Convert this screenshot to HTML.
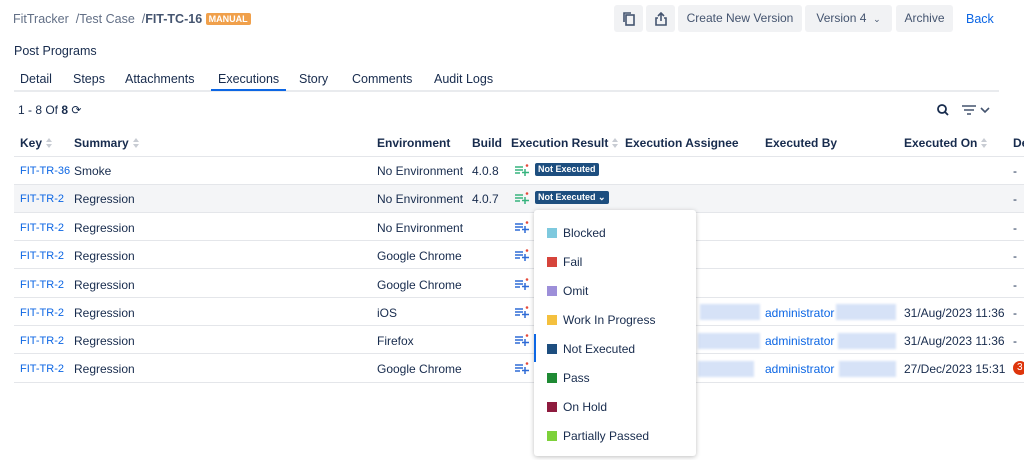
<!DOCTYPE html>
<html><head><style>
*{box-sizing:border-box;margin:0;padding:0}
body{width:1024px;height:460px;overflow:hidden;background:#fff;font-family:"Liberation Sans",sans-serif;font-size:12px;color:#172b4d;position:relative}
.a{position:absolute;white-space:nowrap}
.btn{position:absolute;top:5px;height:27px;background:#f1f2f4;border-radius:3px;color:#44546f;font-size:12px;line-height:27px;text-align:center}
.tab{position:absolute;top:72px;font-size:12.5px;color:#172b4d}
.hl{position:absolute;left:14px;width:1010px;height:1px;background:#e4e6ea}
.th{position:absolute;top:136px;font-weight:bold;font-size:12px}
.lnk{color:#0c66e4}
.k{font-size:11px;margin-top:1px}
.sort{display:inline-block;width:7px;height:10px;vertical-align:-1px;margin-left:4px;position:relative}
.sort:before{content:"";position:absolute;left:0;top:0;border-left:3.5px solid transparent;border-right:3.5px solid transparent;border-bottom:4px solid #c8ccd3}
.sort:after{content:"";position:absolute;left:0;top:6px;border-left:3.5px solid transparent;border-right:3.5px solid transparent;border-top:4px solid #c8ccd3}
.ne{position:absolute;background:#1d4e7f;color:#fff;font-size:9px;font-weight:bold;border-radius:2px;padding:0 3px;height:13px;line-height:13px}
.blur{position:absolute;height:16px;background:#d6e2f7;filter:blur(1px)}
.dd{position:absolute;left:534px;top:210px;width:162px;height:246px;background:#fff;box-shadow:0 1px 5px rgba(0,0,0,.25);border-radius:3px}
.it{position:absolute;left:13px;font-size:12px;color:#172b4d}
.sq{display:inline-block;width:10px;height:10px;margin-right:6px;vertical-align:-1px}
</style></head><body>
<div class="a" style="left:13px;top:12px;color:#626f86;font-size:12.5px">FitTracker &nbsp;/Test Case &nbsp;/<b style="color:#44546f">FIT-TC-16</b> <span style="background:#f0a04b;color:#fff;font-size:9px;font-weight:bold;padding:1px 3px;border-radius:2px;vertical-align:1px">MANUAL</span></div>
<div class="btn" style="left:614px;width:29px"><svg width="14" height="14" viewBox="0 0 14 14" style="margin-top:7px"><rect x="4" y="3" width="8" height="10" fill="none" stroke="#44546f" stroke-width="1.6"/><path d="M2 10V1h7" fill="none" stroke="#44546f" stroke-width="1.6"/></svg></div>
<div class="btn" style="left:646px;width:29px"><svg width="14" height="14" viewBox="0 0 14 14" style="margin-top:7px"><path d="M7 9V1M4 4l3-3 3 3M4 6H2v7h10V6h-2" fill="none" stroke="#44546f" stroke-width="1.6"/></svg></div>
<div class="btn" style="left:678px;width:124px">Create New Version</div>
<div class="btn" style="left:805px;width:87px">Version 4 &nbsp;<span style="font-size:9px">&#8964;</span></div>
<div class="btn" style="left:896px;width:57px">Archive</div>
<div class="a lnk" style="left:966px;top:12px;font-size:12.5px">Back</div>
<div class="a" style="left:14px;top:44px;font-size:12.5px">Post Programs</div>
<div class="tab" style="left:20px">Detail</div>
<div class="tab" style="left:73px">Steps</div>
<div class="tab" style="left:125px">Attachments</div>
<div class="tab" style="left:218px">Executions</div>
<div class="tab" style="left:299px">Story</div>
<div class="tab" style="left:352px">Comments</div>
<div class="tab" style="left:434px">Audit Logs</div>
<div class="a" style="left:14px;top:90px;width:985px;height:2px;background:#e9ebee"></div>
<div class="a" style="left:211px;top:89px;width:75px;height:2px;background:#0c66e4"></div>
<div class="a" style="left:18px;top:103px;font-size:12px">1 - 8 Of <b>8</b> &#10227;</div>
<svg class="a" style="left:936px;top:103px" width="60" height="14"><circle cx="6" cy="6" r="4" fill="none" stroke="#172b4d" stroke-width="1.8"/><path d="M9 9l3 3" stroke="#172b4d" stroke-width="1.8"/><path d="M26 3h14M28 7h10M31 11h4" stroke="#44546f" stroke-width="1.6"/><path d="M45 5l4 4 4-4" fill="none" stroke="#44546f" stroke-width="1.6"/></svg>
<div class="th" style="left:20px">Key<span class="sort"></span></div>
<div class="th" style="left:74px">Summary<span class="sort"></span></div>
<div class="th" style="left:377px">Environment</div>
<div class="th" style="left:472px">Build</div>
<div class="th" style="left:511px">Execution Result<span class="sort"></span></div>
<div class="th" style="left:625px">Execution Assignee</div>
<div class="th" style="left:765px">Executed By</div>
<div class="th" style="left:904px">Executed On<span class="sort"></span></div>
<div class="th" style="left:1013px">De</div>
<div class="a" style="left:14px;top:185px;width:1010px;height:27px;background:#f4f5f7"></div>
<div class="hl" style="top:156px"></div><div class="hl" style="top:184px"></div><div class="hl" style="top:212px"></div><div class="hl" style="top:240px"></div><div class="hl" style="top:268px"></div><div class="hl" style="top:297px"></div><div class="hl" style="top:325px"></div><div class="hl" style="top:353px"></div><div class="hl" style="top:382px"></div>

<div class="a lnk k" style="left:20px;top:164px">FIT-TR-36</div><div class="a" style="left:74px;top:164px">Smoke</div><div class="a" style="left:377px;top:164px">No Environment</div><div class="a" style="left:472px;top:164px">4.0.8</div>
<div class="a lnk k" style="left:20px;top:192px">FIT-TR-2</div><div class="a" style="left:74px;top:192px">Regression</div><div class="a" style="left:377px;top:192px">No Environment</div><div class="a" style="left:472px;top:192px">4.0.7</div>
<div class="a lnk k" style="left:20px;top:221px">FIT-TR-2</div><div class="a" style="left:74px;top:221px">Regression</div><div class="a" style="left:377px;top:221px">No Environment</div>
<div class="a lnk k" style="left:20px;top:249px">FIT-TR-2</div><div class="a" style="left:74px;top:249px">Regression</div><div class="a" style="left:377px;top:249px">Google Chrome</div>
<div class="a lnk k" style="left:20px;top:278px">FIT-TR-2</div><div class="a" style="left:74px;top:278px">Regression</div><div class="a" style="left:377px;top:278px">Google Chrome</div>
<div class="a lnk k" style="left:20px;top:306px">FIT-TR-2</div><div class="a" style="left:74px;top:306px">Regression</div><div class="a" style="left:377px;top:306px">iOS</div>
<div class="a lnk k" style="left:20px;top:334px">FIT-TR-2</div><div class="a" style="left:74px;top:334px">Regression</div><div class="a" style="left:377px;top:334px">Firefox</div>
<div class="a lnk k" style="left:20px;top:362px">FIT-TR-2</div><div class="a" style="left:74px;top:362px">Regression</div><div class="a" style="left:377px;top:362px">Google Chrome</div>

<svg class="a" style="left:515px;top:164px" width="14" height="12"><path d="M0 3h8M0 6h8M0 9h5M10 5v7M7 8.5h7" stroke="#36b37e" stroke-width="1.5"/><circle cx="12" cy="1.5" r="1.3" fill="#e5493a"/></svg>
<svg class="a" style="left:515px;top:192px" width="14" height="12"><path d="M0 3h8M0 6h8M0 9h5M10 5v7M7 8.5h7" stroke="#36b37e" stroke-width="1.5"/><circle cx="12" cy="1.5" r="1.3" fill="#e5493a"/></svg>
<svg class="a" style="left:515px;top:221px" width="14" height="12"><path d="M0 3h8M0 6h8M0 9h5M10 5v7M7 8.5h7" stroke="#2f6bd6" stroke-width="1.5"/><circle cx="12" cy="1.5" r="1.3" fill="#e5493a"/></svg>
<svg class="a" style="left:515px;top:249px" width="14" height="12"><path d="M0 3h8M0 6h8M0 9h5M10 5v7M7 8.5h7" stroke="#2f6bd6" stroke-width="1.5"/><circle cx="12" cy="1.5" r="1.3" fill="#e5493a"/></svg>
<svg class="a" style="left:515px;top:278px" width="14" height="12"><path d="M0 3h8M0 6h8M0 9h5M10 5v7M7 8.5h7" stroke="#2f6bd6" stroke-width="1.5"/><circle cx="12" cy="1.5" r="1.3" fill="#e5493a"/></svg>
<svg class="a" style="left:515px;top:306px" width="14" height="12"><path d="M0 3h8M0 6h8M0 9h5M10 5v7M7 8.5h7" stroke="#2f6bd6" stroke-width="1.5"/><circle cx="12" cy="1.5" r="1.3" fill="#e5493a"/></svg>
<svg class="a" style="left:515px;top:334px" width="14" height="12"><path d="M0 3h8M0 6h8M0 9h5M10 5v7M7 8.5h7" stroke="#2f6bd6" stroke-width="1.5"/><circle cx="12" cy="1.5" r="1.3" fill="#e5493a"/></svg>
<svg class="a" style="left:515px;top:362px" width="14" height="12"><path d="M0 3h8M0 6h8M0 9h5M10 5v7M7 8.5h7" stroke="#2f6bd6" stroke-width="1.5"/><circle cx="12" cy="1.5" r="1.3" fill="#e5493a"/></svg>
<div class="ne" style="left:535px;top:163px">Not Executed</div>
<div class="ne" style="left:535px;top:191px">Not Executed &#8964;</div>

<div class="blur" style="left:700px;top:304px;width:60px"></div><div class="blur" style="left:836px;top:304px;width:60px"></div>
<div class="blur" style="left:698px;top:333px;width:62px"></div><div class="blur" style="left:838px;top:333px;width:58px"></div>
<div class="blur" style="left:698px;top:361px;width:56px"></div><div class="blur" style="left:839px;top:361px;width:57px"></div>
<div class="a lnk" style="left:765px;top:306px">administrator</div><div class="a" style="left:904px;top:306px">31/Aug/2023 11:36</div>
<div class="a lnk" style="left:765px;top:334px">administrator</div><div class="a" style="left:904px;top:334px">31/Aug/2023 11:36</div>
<div class="a lnk" style="left:765px;top:362px">administrator</div><div class="a" style="left:904px;top:362px">27/Dec/2023 15:31</div>
<div class="a" style="left:1013px;top:164px">-</div><div class="a" style="left:1013px;top:192px">-</div><div class="a" style="left:1013px;top:221px">-</div><div class="a" style="left:1013px;top:249px">-</div><div class="a" style="left:1013px;top:278px">-</div><div class="a" style="left:1013px;top:306px">-</div><div class="a" style="left:1013px;top:334px">-</div>
<div class="a" style="left:1013px;top:361px;width:14px;height:14px;border-radius:7px;background:#de350b;color:#fff;font-size:10px;line-height:14px;padding-left:4px">3</div>

<div class="dd">
<div class="it" style="top:16px"><span class="sq" style="background:#7ec9de"></span>Blocked</div>
<div class="it" style="top:45px"><span class="sq" style="background:#d6443b"></span>Fail</div>
<div class="it" style="top:74px"><span class="sq" style="background:#9d8fd9"></span>Omit</div>
<div class="it" style="top:103px"><span class="sq" style="background:#f4c03e"></span>Work In Progress</div>
<div class="a" style="left:0;top:124px;width:2px;height:28px;background:#0c66e4"></div>
<div class="it" style="top:132px"><span class="sq" style="background:#1d4e7f"></span>Not Executed</div>
<div class="it" style="top:161px"><span class="sq" style="background:#1f8a34"></span>Pass</div>
<div class="it" style="top:190px"><span class="sq" style="background:#8e1b3e"></span>On Hold</div>
<div class="it" style="top:219px"><span class="sq" style="background:#7dd13a"></span>Partially Passed</div>
</div>
</body></html>
